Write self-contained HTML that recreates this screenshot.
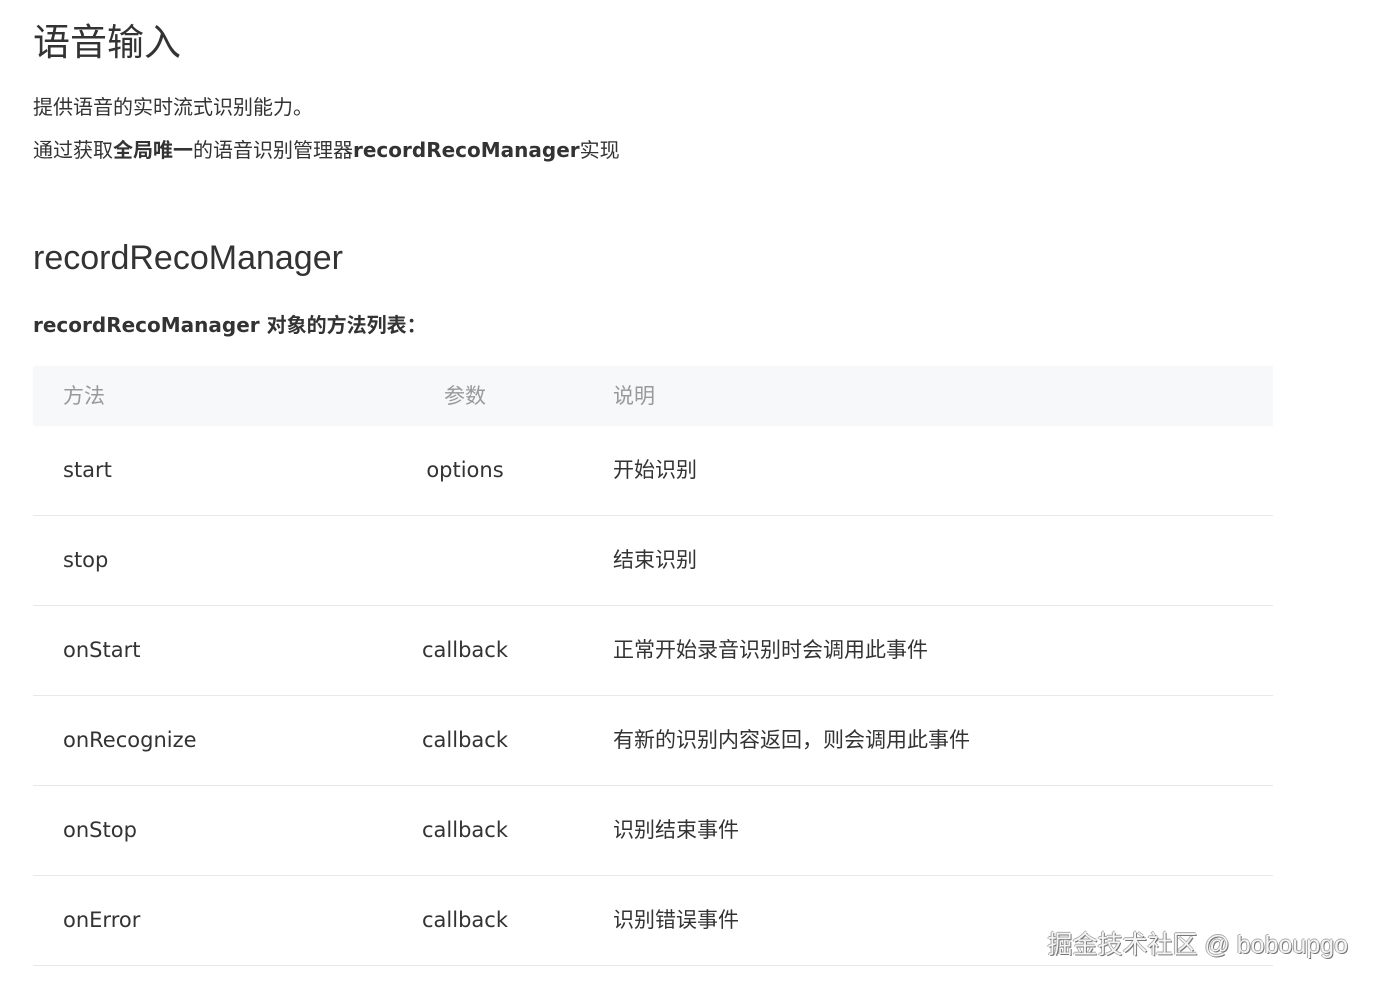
<!DOCTYPE html>
<html><head><meta charset="utf-8"><style>
body{margin:0;background:#fff;width:1374px;height:988px;overflow:hidden;font-family:"DejaVu Sans","Noto Sans CJK SC",sans-serif;color:#333;position:relative}
.a{position:absolute;white-space:nowrap;line-height:30px}
h1{position:absolute;left:33px;top:12px;margin:0;font-size:37px;font-weight:normal;color:#333;font-family:"Liberation Sans","Noto Sans CJK SC",sans-serif}
h2{position:absolute;left:33px;top:239px;margin:0;font-size:34px;font-weight:normal;color:#333;font-family:"Liberation Sans","Noto Sans CJK SC",sans-serif}
.p{font-size:20px;left:33px}
.th{position:absolute;left:33px;top:366px;width:1240px;height:60px;background:#f7f8fa}
.hd{color:#999;font-size:21px}
.td{font-size:21px;color:#333}
.ln{position:absolute;left:33px;width:1240px;height:1px;background:#e8e8e8}
.c2{width:236px;left:347px;text-align:center}
.wm{right:26px;top:930px;font-size:25px;color:#f4f4f4;text-shadow:1px 1px 0 #777,-1px 0 0 #aaa,0 -1px 0 #aaa;font-family:"Liberation Sans","Noto Sans CJK SC",sans-serif}
</style></head><body>
<h1>语音输入</h1>
<div class="a p" style="top:92px">提供语音的实时流式识别能力。</div>
<div class="a p" style="top:135px">通过获取<b>全局唯一</b>的语音识别管理器<b>recordRecoManager</b>实现</div>
<h2>recordRecoManager</h2>
<div class="a p" style="top:310px"><b>recordRecoManager 对象的方法列表：</b></div>
<div class="th"></div>
<div class="a hd" style="left:63px;top:381px">方法</div>
<div class="a hd c2" style="top:381px">参数</div>
<div class="a hd" style="left:613px;top:381px">说明</div>

<div class="a td" style="left:63px;top:455px">start</div><div class="a td c2" style="top:455px">options</div><div class="a td" style="left:613px;top:455px">开始识别</div>
<div class="ln" style="top:515px"></div>
<div class="a td" style="left:63px;top:545px">stop</div><div class="a td" style="left:613px;top:545px">结束识别</div>
<div class="ln" style="top:605px"></div>
<div class="a td" style="left:63px;top:635px">onStart</div><div class="a td c2" style="top:635px">callback</div><div class="a td" style="left:613px;top:635px">正常开始录音识别时会调用此事件</div>
<div class="ln" style="top:695px"></div>
<div class="a td" style="left:63px;top:725px">onRecognize</div><div class="a td c2" style="top:725px">callback</div><div class="a td" style="left:613px;top:725px">有新的识别内容返回，则会调用此事件</div>
<div class="ln" style="top:785px"></div>
<div class="a td" style="left:63px;top:815px">onStop</div><div class="a td c2" style="top:815px">callback</div><div class="a td" style="left:613px;top:815px">识别结束事件</div>
<div class="ln" style="top:875px"></div>
<div class="a td" style="left:63px;top:905px">onError</div><div class="a td c2" style="top:905px">callback</div><div class="a td" style="left:613px;top:905px">识别错误事件</div>
<div class="ln" style="top:965px"></div>
<div class="a wm">掘金技术社区 @ boboupgo</div>
</body></html>
